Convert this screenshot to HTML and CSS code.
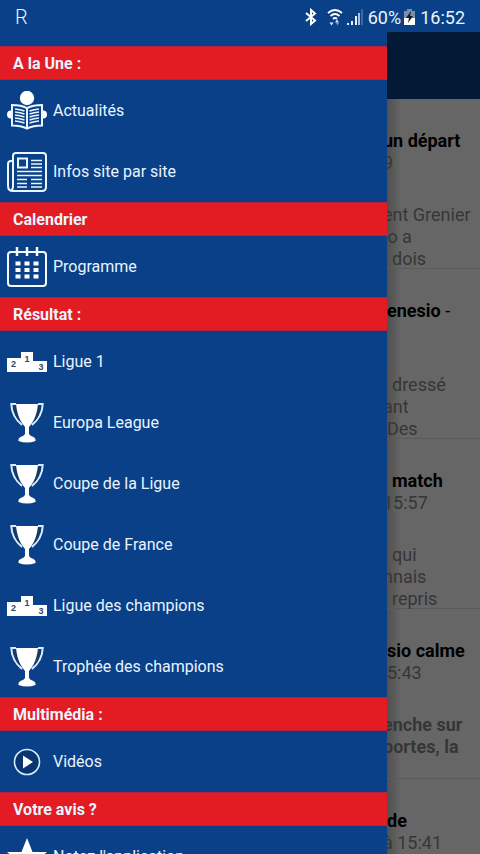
FILE: index.html
```html
<!DOCTYPE html>
<html lang="fr">
<head>
<meta charset="utf-8">
<meta name="viewport" content="width=device-width, initial-scale=1">
<title>Actualités</title>
<link rel="stylesheet" href="styles.css">
</head>
<body>
<svg class="sprite" aria-hidden="true">
  <symbol id="reader" viewBox="0 0 40 40">
    <circle cx="20" cy="7" r="7.2" fill="#fff"/>
    <path d="M4 19.5a4 4 0 0 0 0 8zM36 19.5a4 4 0 0 1 0 8z" fill="#fff"/>
    <path d="M5 14q9 0 15 3.200q6-3.200 15-3.200v20.500q-9 0-15 3q-6-3-15-3z" fill="#0a4088" stroke="#e9f5ff" stroke-width="2"/>
    <path d="M20 17v20" stroke="#e9f5ff" stroke-width="2"/>
    <path d="M8 18q5 .3 9.500 2M8 21q5 .3 9.500 2M8 24q5 .3 9.500 2M8 27q5 .3 9.500 2M8 30q5 .3 9.500 2M32 18q-5 .3-9.500 2M32 21q-5 .3-9.500 2M32 24q-5 .3-9.500 2M32 27q-5 .3-9.500 2M32 30q-5 .3-9.500 2" fill="none" stroke="#e9f5ff" stroke-width="1.500"/>
  </symbol>
  <symbol id="newspaper" viewBox="0 0 40 40">
    <g fill="none" stroke="#e9f5ff">
      <path d="M6 35V4q0-3 3-3h27q3 0 3 3v31q0 4-4 4H6q-5 0-5-5V12q0-3 3-3h2M6 9v25q0 4-2 4" stroke-width="2"/>
      <rect x="11" y="6.500" width="9" height="9" stroke-width="2"/>
      <path d="M24 8.500h11M24 12h11M24 15.500h11M10 19.500h25M10 23.500h25M10 27.500h10M10 31.500h10M10 35h10M24 27.500h11M24 31.500h11M24 35h11" stroke-width="1.500"/>
    </g>
  </symbol>
  <symbol id="calendar" viewBox="0 0 40 40">
    <rect x="1" y="5" width="38" height="34" rx="3" fill="none" stroke="#f4faff" stroke-width="2"/>
    <path d="M10 0v9M20 0v9M30 0v9" stroke="#f4faff" stroke-width="2.500"/>
    <path d="M8.500 14.500h5v4h-5zM17.500 14.500h5v4h-5zM26.500 14.500h5v4h-5zM8.500 21h5v4h-5zM17.500 21h5v4h-5zM26.500 21h5v4h-5zM8.500 27.500h5v4h-5zM17.500 27.500h5v4h-5zM26.500 27.500h5v4h-5z" fill="#fff"/>
  </symbol>
  <symbol id="podium" viewBox="0 0 40 40">
    <path d="M0 16h14V10h12v9h14v11H0z" fill="#fff"/>
    <g fill="#2f4568" font-family="Liberation Sans, sans-serif" font-weight="700" text-anchor="middle">
      <text x="6.500" y="25" font-size="9">2</text>
      <text x="20" y="20" font-size="9">1</text>
      <text x="34" y="28" font-size="9">3</text>
    </g>
  </symbol>
  <symbol id="cup" viewBox="0 0 40 40">
    <path d="M9 1H4.300C4.500 10 8 16 15 22M31 1h4.700C35.500 10 32 16 25 22" fill="none" stroke="#d8ecff" stroke-width="2"/>
    <path d="M6 3l1.500 6q1 6 6 10L9 3zM34 3l-1.500 6q-1 6-6 10L31 3z" fill="#17395f"/>
    <path d="M9 1h22q-1 10-4.500 16.500Q24 22 22 24v7q1 2 4.500 3q2.500 1 2 4q-8.500 3-17 0q-.5-3 2-4Q17 33 18 31v-7q-2-2-4.500-6.500Q10 11 9 1z" fill="#fff"/>
  </symbol>
  <symbol id="play" viewBox="0 0 40 40">
    <circle cx="20" cy="20" r="12.500" fill="#0a356f" stroke="#d8ecff" stroke-width="1.600"/>
    <path d="M16 13.500v13l10-6.500z" fill="#fff"/>
  </symbol>
  <symbol id="star" viewBox="0 0 40 40">
    <path d="M20 1l5.500 14H40L28.500 24.500 32 39 20 30.500 8 39l3.500-14.500L0 15h14.500z" fill="#fff"/>
  </symbol>
</svg>

<header class="status">
  <span class="status-app">R</span>
  <div class="status-right">
    <svg class="bluetooth" viewBox="0 0 12 18" aria-hidden="true"><path d="M1 5l9 7.500-4 3.500V2l4 3.500L1 13" fill="none" stroke="#fff" stroke-width="2"/></svg>
    <svg class="wifi" viewBox="0 0 16 18" aria-hidden="true"><path d="M1 5q7-6 14 0M3.500 8q4.500-4 9 0M6 11q2-2 4 0" fill="none" stroke="#fff" stroke-width="1.800"/><path d="M2.500 14.500h4l-2 3zM8 14.500l2-3 2 3z" fill="#dcecff"/><path d="M9 15h3l-1.500 2.500z" fill="#7795c0"/></svg>
    <svg class="signal" viewBox="0 0 16 18" aria-hidden="true"><path d="M0 17v-2h2v2zM4 17v-4h2v4zM8 17V8h2v9z" fill="#e6f2ff"/><path d="M11 17V5h2v12z" fill="#a9c2e0"/><path d="M14 17V1h2v16z" fill="#3f689f"/></svg>
    <span>60%</span>
    <svg class="battery" viewBox="0 0 11 18" aria-hidden="true"><path d="M3 1h5v2h3v7H0V3h3z" fill="#7b8fa8"/><path d="M0 10h11v7H0z" fill="#fff"/><path d="M7 3L2 10h3l-1 5 5-7H6z" fill="#101c2c"/></svg>
    <span class="clock">16:52</span>
  </div>
</header>

<div class="screen">
  <nav class="drawer">
    <h2>A la Une :</h2>
    <a href="#"><svg aria-hidden="true"><use href="#reader"/></svg>Actualités</a>
    <a href="#"><svg aria-hidden="true"><use href="#newspaper"/></svg>Infos site par site</a>
    <h2>Calendrier</h2>
    <a href="#"><svg aria-hidden="true"><use href="#calendar"/></svg>Programme</a>
    <h2>Résultat :</h2>
    <a href="#"><svg aria-hidden="true"><use href="#podium"/></svg>Ligue 1</a>
    <a href="#"><svg aria-hidden="true"><use href="#cup"/></svg>Europa League</a>
    <a href="#"><svg aria-hidden="true"><use href="#cup"/></svg>Coupe de la Ligue</a>
    <a href="#"><svg aria-hidden="true"><use href="#cup"/></svg>Coupe de France</a>
    <a href="#"><svg aria-hidden="true"><use href="#podium"/></svg>Ligue des champions</a>
    <a href="#"><svg aria-hidden="true"><use href="#cup"/></svg>Trophée des champions</a>
    <h2>Multimédia :</h2>
    <a href="#"><svg aria-hidden="true"><use href="#play"/></svg>Vidéos</a>
    <h2>Votre avis ?</h2>
    <a href="#"><svg aria-hidden="true"><use href="#star"/></svg>Notez l'application</a>
  </nav>

  <main class="page">
    <div class="appbar"></div>
    <article>
      <h3 class="cut">un départ</h3>
      <p class="cut">9</p>
      <div class="summary"><p class="cut">ent Grenier</p><p class="cut">io a</p><p class="word">dois</p></div>
    </article>
    <article>
      <h3>enesio <span class="plain">-</span></h3>
      <p class="date"></p>
      <div class="summary"><p class="word">dressé</p><p class="cut">ant</p><p>Des</p></div>
    </article>
    <article>
      <h3 class="word">match</h3>
      <p class="cut">15:57</p>
      <div class="summary"><p class="word">qui</p><p class="cut">nnais</p><p class="word">repris</p></div>
    </article>
    <article>
      <h3>sio calme</h3>
      <p>5:43</p>
      <div class="summary strong"><p class="cut">enche sur</p><p class="cut">portes, la</p></div>
    </article>
    <article>
      <h3>de</h3>
      <p class="cut">à 15:41</p>
      <div class="summary"></div>
    </article>
  </main>
</div>
</body>
</html>
```
FILE: styles.css
```css
* { box-sizing: border-box; }

body {
  margin: 0;
  height: 100vh;
  overflow: hidden;
  display: flex;
  flex-direction: column;
  background: #0a4088;
  color: #e9f4ff;
  font-family: Roboto, sans-serif;
}

h2, h3, p { margin: 0; }

.sprite { display: none; }

.status {
  flex: none;
  display: flex;
  justify-content: space-between;
  align-items: center;
  height: 32px;
  padding: 2px 15px 0;
  font-size: 18px;
}

.status-app {
  font-size: 20px;
  font-weight: 300;
}

.status-right {
  display: flex;
  align-items: center;
}

.status svg { height: 18px; }
.bluetooth { width: 12px; margin-right: 10px; }
.wifi { width: 16px; margin-right: 4px; }
.signal { width: 16px; margin-right: 5px; }
.battery { width: 11px; margin: 0 5px 0 3px; }

.screen {
  flex: 1;
  min-height: 0;
  display: grid;
  grid-template-columns: minmax(0, 387px) minmax(93px, 1fr);
}

.drawer {
  min-width: 0;
  padding-top: 14px;
}

.drawer h2 {
  height: 34px;
  padding-left: 13px;
  background: #e31b23;
  border: solid #b52142;
  border-width: 1px 0;
  font-size: 16px;
  font-weight: 700;
  line-height: 34px;
}

.drawer a {
  display: flex;
  align-items: center;
  gap: 6px;
  height: 61px;
  padding-left: 7px;
  color: inherit;
  font-size: 16px;
  text-decoration: none;
}

.drawer svg {
  width: 40px;
  height: 40px;
  overflow: visible;
}

.page {
  min-width: 0;
  overflow: hidden;
  background: linear-gradient(90deg, #505050, #666 14px);
  color: #363636;
  font-size: 18px;
  line-height: 22px;
  white-space: nowrap;
}

.appbar {
  height: 67px;
  background: #041935;
}

article {
  height: 170px;
  padding-top: 31px;
  border-bottom: 1px solid #5a5a5a;
}

h3 {
  color: #000;
  font-size: 18px;
  font-weight: 700;
}

.plain { font-weight: 400; }
.date { min-height: 22px; }
.summary { padding-top: 30px; }
.strong { font-weight: 700; }
.cut { text-indent: -4px; }
.word { text-indent: 5px; }
```
